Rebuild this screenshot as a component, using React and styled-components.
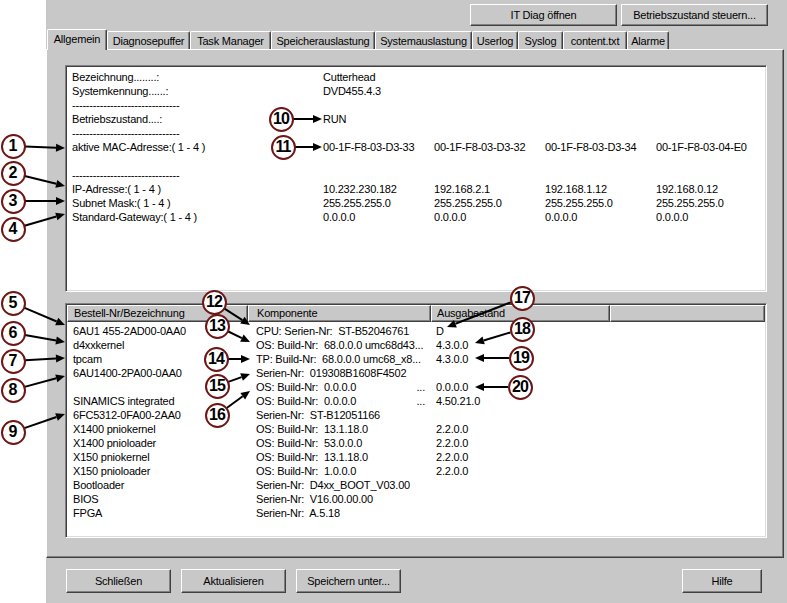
import React from 'react';
import styled, { createGlobalStyle } from 'styled-components';

const FACE = '#c8c8c8';

const GlobalStyle = createGlobalStyle`
  html, body {
    margin: 0;
    padding: 0;
    background: #fff;
  }
  body {
    font-family: "Liberation Sans", Arial, sans-serif;
    font-size: 11px;
    letter-spacing: -0.2px;
    color: #000;
  }
`;

const Page = styled.div`
  position: relative;
  display: flex;
  width: 787px;
  height: 603px;
  overflow: hidden;
  background: #fff;
`;

const Gutter = styled.div`
  width: 46px;
  flex: none;
`;

const Dialog = styled.div`
  flex: 1;
  display: flex;
  flex-direction: column;
  background: ${FACE};
`;

const TopBar = styled.div`
  display: flex;
  justify-content: flex-end;
  gap: 4px;
  height: 22px;
  padding: 4px 19px 3px 0;
`;

const Button = styled.button`
  width: ${p => p.$w}px;
  height: ${p => p.$h || 24}px;
  padding: 0;
  background: ${FACE};
  font: 11px "Liberation Sans", Arial, sans-serif;
  letter-spacing: -0.2px;
  color: #000;
  border: 1px solid;
  border-color: #fff #404040 #404040 #fff;
  box-shadow: inset -1px -1px 0 #808080;
  border-radius: 0;
`;

const TabStrip = styled.div`
  position: relative;
  z-index: 1;
  display: flex;
  align-items: flex-end;
  height: 21px;
  margin-bottom: -1px;
  padding-left: 1px;
`;

const Tab = styled.div`
  box-sizing: border-box;
  width: ${p => p.$w}px;
  height: ${p => (p.$active ? 21 : 18)}px;
  margin-bottom: ${p => (p.$active ? 0 : 1)}px;
  display: flex;
  align-items: center;
  justify-content: center;
  padding-bottom: ${p => (p.$active ? 2 : 0)}px;
  background: ${FACE};
  border-left: 1px solid #fff;
  border-top: 1px solid #fff;
  border-right: 1px solid #404040;
  border-radius: 2px 2px 0 0;
  box-shadow: inset -1px 0 0 #808080;
  white-space: nowrap;
`;

const Panel = styled.div`
  box-sizing: border-box;
  height: 509px;
  margin-right: 3px;
  padding: 15px 0 0 18px;
  display: flex;
  flex-direction: column;
  gap: 11px;
  border: 1px solid;
  border-color: #fff #404040 #404040 #fff;
  box-shadow: inset -1px -1px 0 #808080;
`;

const Sunken = styled.div`
  box-sizing: border-box;
  width: 702px;
  height: ${p => p.$h}px;
  background: #fff;
  border: 1px solid;
  border-color: #808080 #fff #fff #808080;
  box-shadow: inset 1px 1px 0 #404040, inset -1px -1px 0 #dcdcdc;
`;

const InfoGrid = styled.div`
  display: grid;
  grid-template-columns: 251px repeat(4, 111px);
  grid-auto-rows: 14px;
  line-height: 14px;
  padding: 4px 0 0 6px;
  white-space: pre;
`;

const Header = styled.div`
  display: grid;
  grid-template-columns: 181px 183px 179px 1fr;
  height: 17px;
  margin: 1px 1px 0 1px;
`;

const HeadCell = styled.div`
  box-sizing: border-box;
  height: 17px;
  line-height: 15px;
  padding-left: ${p => p.$pad || 6}px;
  background: ${FACE};
  border-top: 1px solid #fff;
  border-left: 1px solid #fff;
  border-bottom: 1px solid #404040;
  border-right: 1px solid #404040;
  box-shadow: inset -1px -1px 0 #808080;
  white-space: nowrap;
`;

const Rows = styled.div`
  padding: 2px 1px 0 1px;
`;

const Row = styled.div`
  display: grid;
  grid-template-columns: 181px 183px 179px;
  height: 14px;
  line-height: 14px;
  white-space: pre;
`;

const Cell = styled.div`
  display: flex;
  justify-content: space-between;
  padding: 0 6px 0 ${p => p.$pad || 6}px;
  overflow: hidden;
`;

const Footer = styled.div`
  display: flex;
  gap: 10px;
  padding: 11px 25px 0 20px;
`;

const Spacer = styled.div`
  flex: 1;
`;

const Overlay = styled.div`
  position: absolute;
  inset: 0;
  pointer-events: none;
`;

const Arrows = styled.svg`
  position: absolute;
  left: 0;
  top: 0;
`;

const Badge = styled.div`
  position: absolute;
  box-sizing: border-box;
  width: 25px;
  height: 25px;
  margin: -12.5px 0 0 -12.5px;
  border: 2px solid #6e1616;
  border-radius: 50%;
  background: #fff;
  display: flex;
  align-items: center;
  justify-content: center;
  font: bold 16px "Liberation Sans", Arial, sans-serif;
  letter-spacing: ${p => (p.$wide ? '-1px' : '0')};
  color: #000;
`;

const tabs = [
  ['Allgemein', 60],
  ['Diagnosepuffer', 83],
  ['Task Manager', 81],
  ['Speicherauslastung', 104],
  ['Systemauslastung', 97],
  ['Userlog', 46],
  ['Syslog', 45],
  ['content.txt', 64],
  ['Alarme', 42],
];

const DASH = '-'.repeat(31);

const info = [
  ['Bezeichnung........:', 'Cutterhead'],
  ['Systemkennung......:', 'DVD455.4.3'],
  [DASH],
  ['Betriebszustand....:', 'RUN'],
  [DASH],
  ['aktive MAC-Adresse:( 1 - 4 )', '00-1F-F8-03-D3-33', '00-1F-F8-03-D3-32', '00-1F-F8-03-D3-34', '00-1F-F8-03-04-E0'],
  [''],
  [DASH],
  ['IP-Adresse:( 1 - 4 )', '10.232.230.182', '192.168.2.1', '192.168.1.12', '192.168.0.12'],
  ['Subnet Mask:( 1 - 4 )', '255.255.255.0', '255.255.255.0', '255.255.255.0', '255.255.255.0'],
  ['Standard-Gateway:( 1 - 4 )', '0.0.0.0', '0.0.0.0', '0.0.0.0', '0.0.0.0'],
];

const parts = [
  ['6AU1 455-2AD00-0AA0', 'CPU: Serien-Nr:  ST-B52046761', '', 'D'],
  ['d4xxkernel', 'OS: Build-Nr:  68.0.0.0 umc68d43...', '', '4.3.0.0'],
  ['tpcam', 'TP: Build-Nr:  68.0.0.0 umc68_x8...', '', '4.3.0.0'],
  ['6AU1400-2PA00-0AA0', 'Serien-Nr:  019308B1608F4502', '', ''],
  ['', 'OS: Build-Nr:  0.0.0.0', '...', '0.0.0.0'],
  ['SINAMICS integrated', 'OS: Build-Nr:  0.0.0.0', '...', '4.50.21.0'],
  ['6FC5312-0FA00-2AA0', 'Serien-Nr:  ST-B12051166', '', ''],
  ['X1400 pniokernel', 'OS: Build-Nr:  13.1.18.0', '', '2.2.0.0'],
  ['X1400 pnioloader', 'OS: Build-Nr:  53.0.0.0', '', '2.2.0.0'],
  ['X150 pniokernel', 'OS: Build-Nr:  13.1.18.0', '', '2.2.0.0'],
  ['X150 pnioloader', 'OS: Build-Nr:  1.0.0.0', '', '2.2.0.0'],
  ['Bootloader', 'Serien-Nr:  D4xx_BOOT_V03.00', '', ''],
  ['BIOS', 'Serien-Nr:  V16.00.00.00', '', ''],
  ['FPGA', 'Serien-Nr:  A.5.18', '', ''],
];

// callouts: number, circle centre, arrow tip
const callouts = [
  [1, 13, 146, 65, 148],
  [2, 13, 173, 65, 186],
  [3, 13, 201, 65, 201],
  [4, 13, 229, 65, 214],
  [5, 13, 303, 65, 325],
  [6, 13, 333, 65, 342],
  [7, 13, 361, 65, 358],
  [8, 13, 390, 65, 376],
  [9, 13, 432, 65, 414],
  [10, 281, 119, 322, 119],
  [11, 283, 147, 322, 147],
  [12, 214, 302, 250, 325],
  [13, 217, 326, 250, 342],
  [14, 216, 359, 250, 359],
  [15, 217, 386, 250, 374],
  [16, 217, 415, 250, 391],
  [17, 522, 298, 447, 327],
  [18, 522, 329, 475, 343],
  [19, 521, 358, 475, 358],
  [20, 520, 387, 475, 387],
];

function Arrow({ cx, cy, tx, ty }) {
  const dx = tx - cx;
  const dy = ty - cy;
  const len = Math.hypot(dx, dy);
  const ux = dx / len;
  const uy = dy / len;
  const sx = cx + ux * 12;
  const sy = cy + uy * 12;
  const bx = tx - ux * 9;
  const by = ty - uy * 9;
  const px = -uy * 4;
  const py = ux * 4;
  return (
    <g>
      <line x1={sx} y1={sy} x2={bx} y2={by} stroke="#000" strokeWidth="2" />
      <polygon points={`${tx},${ty} ${bx + px},${by + py} ${bx - px},${by - py}`} fill="#000" />
    </g>
  );
}

export default function App() {
  return (
    <Page>
      <GlobalStyle />
      <Gutter />
      <Dialog>
        <TopBar>
          <Button $w={147} $h={22}>IT Diag öffnen</Button>
          <Button $w={147} $h={22}>Betriebszustand steuern...</Button>
        </TopBar>
        <TabStrip>
          {tabs.map(([label, w], i) => (
            <Tab key={label} $w={w} $active={i === 0}>{label}</Tab>
          ))}
        </TabStrip>
        <Panel>
          <Sunken $h={227}>
            <InfoGrid>
              {info.map((row, r) => (
                <React.Fragment key={r}>
                  {[0, 1, 2, 3, 4].map(c => (
                    <span key={c}>{row[c] || ''}</span>
                  ))}
                </React.Fragment>
              ))}
            </InfoGrid>
          </Sunken>
          <Sunken $h={235}>
            <Header>
              <HeadCell>Bestell-Nr/Bezeichnung</HeadCell>
              <HeadCell $pad={8}>Komponente</HeadCell>
              <HeadCell $pad={5}>Ausgabestand</HeadCell>
              <HeadCell />
            </Header>
            <Rows>
              {parts.map((p, i) => (
                <Row key={i}>
                  <Cell>{p[0]}</Cell>
                  <Cell $pad={8}>
                    <span>{p[1]}</span>
                    <span>{p[2]}</span>
                  </Cell>
                  <Cell $pad={5}>{p[3]}</Cell>
                </Row>
              ))}
            </Rows>
          </Sunken>
        </Panel>
        <Footer>
          <Button $w={105}>Schließen</Button>
          <Button $w={105}>Aktualisieren</Button>
          <Button $w={105}>Speichern unter...</Button>
          <Spacer />
          <Button $w={80}>Hilfe</Button>
        </Footer>
      </Dialog>
      <Overlay>
        <Arrows width="787" height="603">
          {callouts.map(([n, cx, cy, tx, ty]) => (
            <Arrow key={n} cx={cx} cy={cy} tx={tx} ty={ty} />
          ))}
        </Arrows>
        {callouts.map(([n, cx, cy]) => (
          <Badge key={n} $wide={n > 9} style={{ left: cx, top: cy }}>{n}</Badge>
        ))}
      </Overlay>
    </Page>
  );
}
